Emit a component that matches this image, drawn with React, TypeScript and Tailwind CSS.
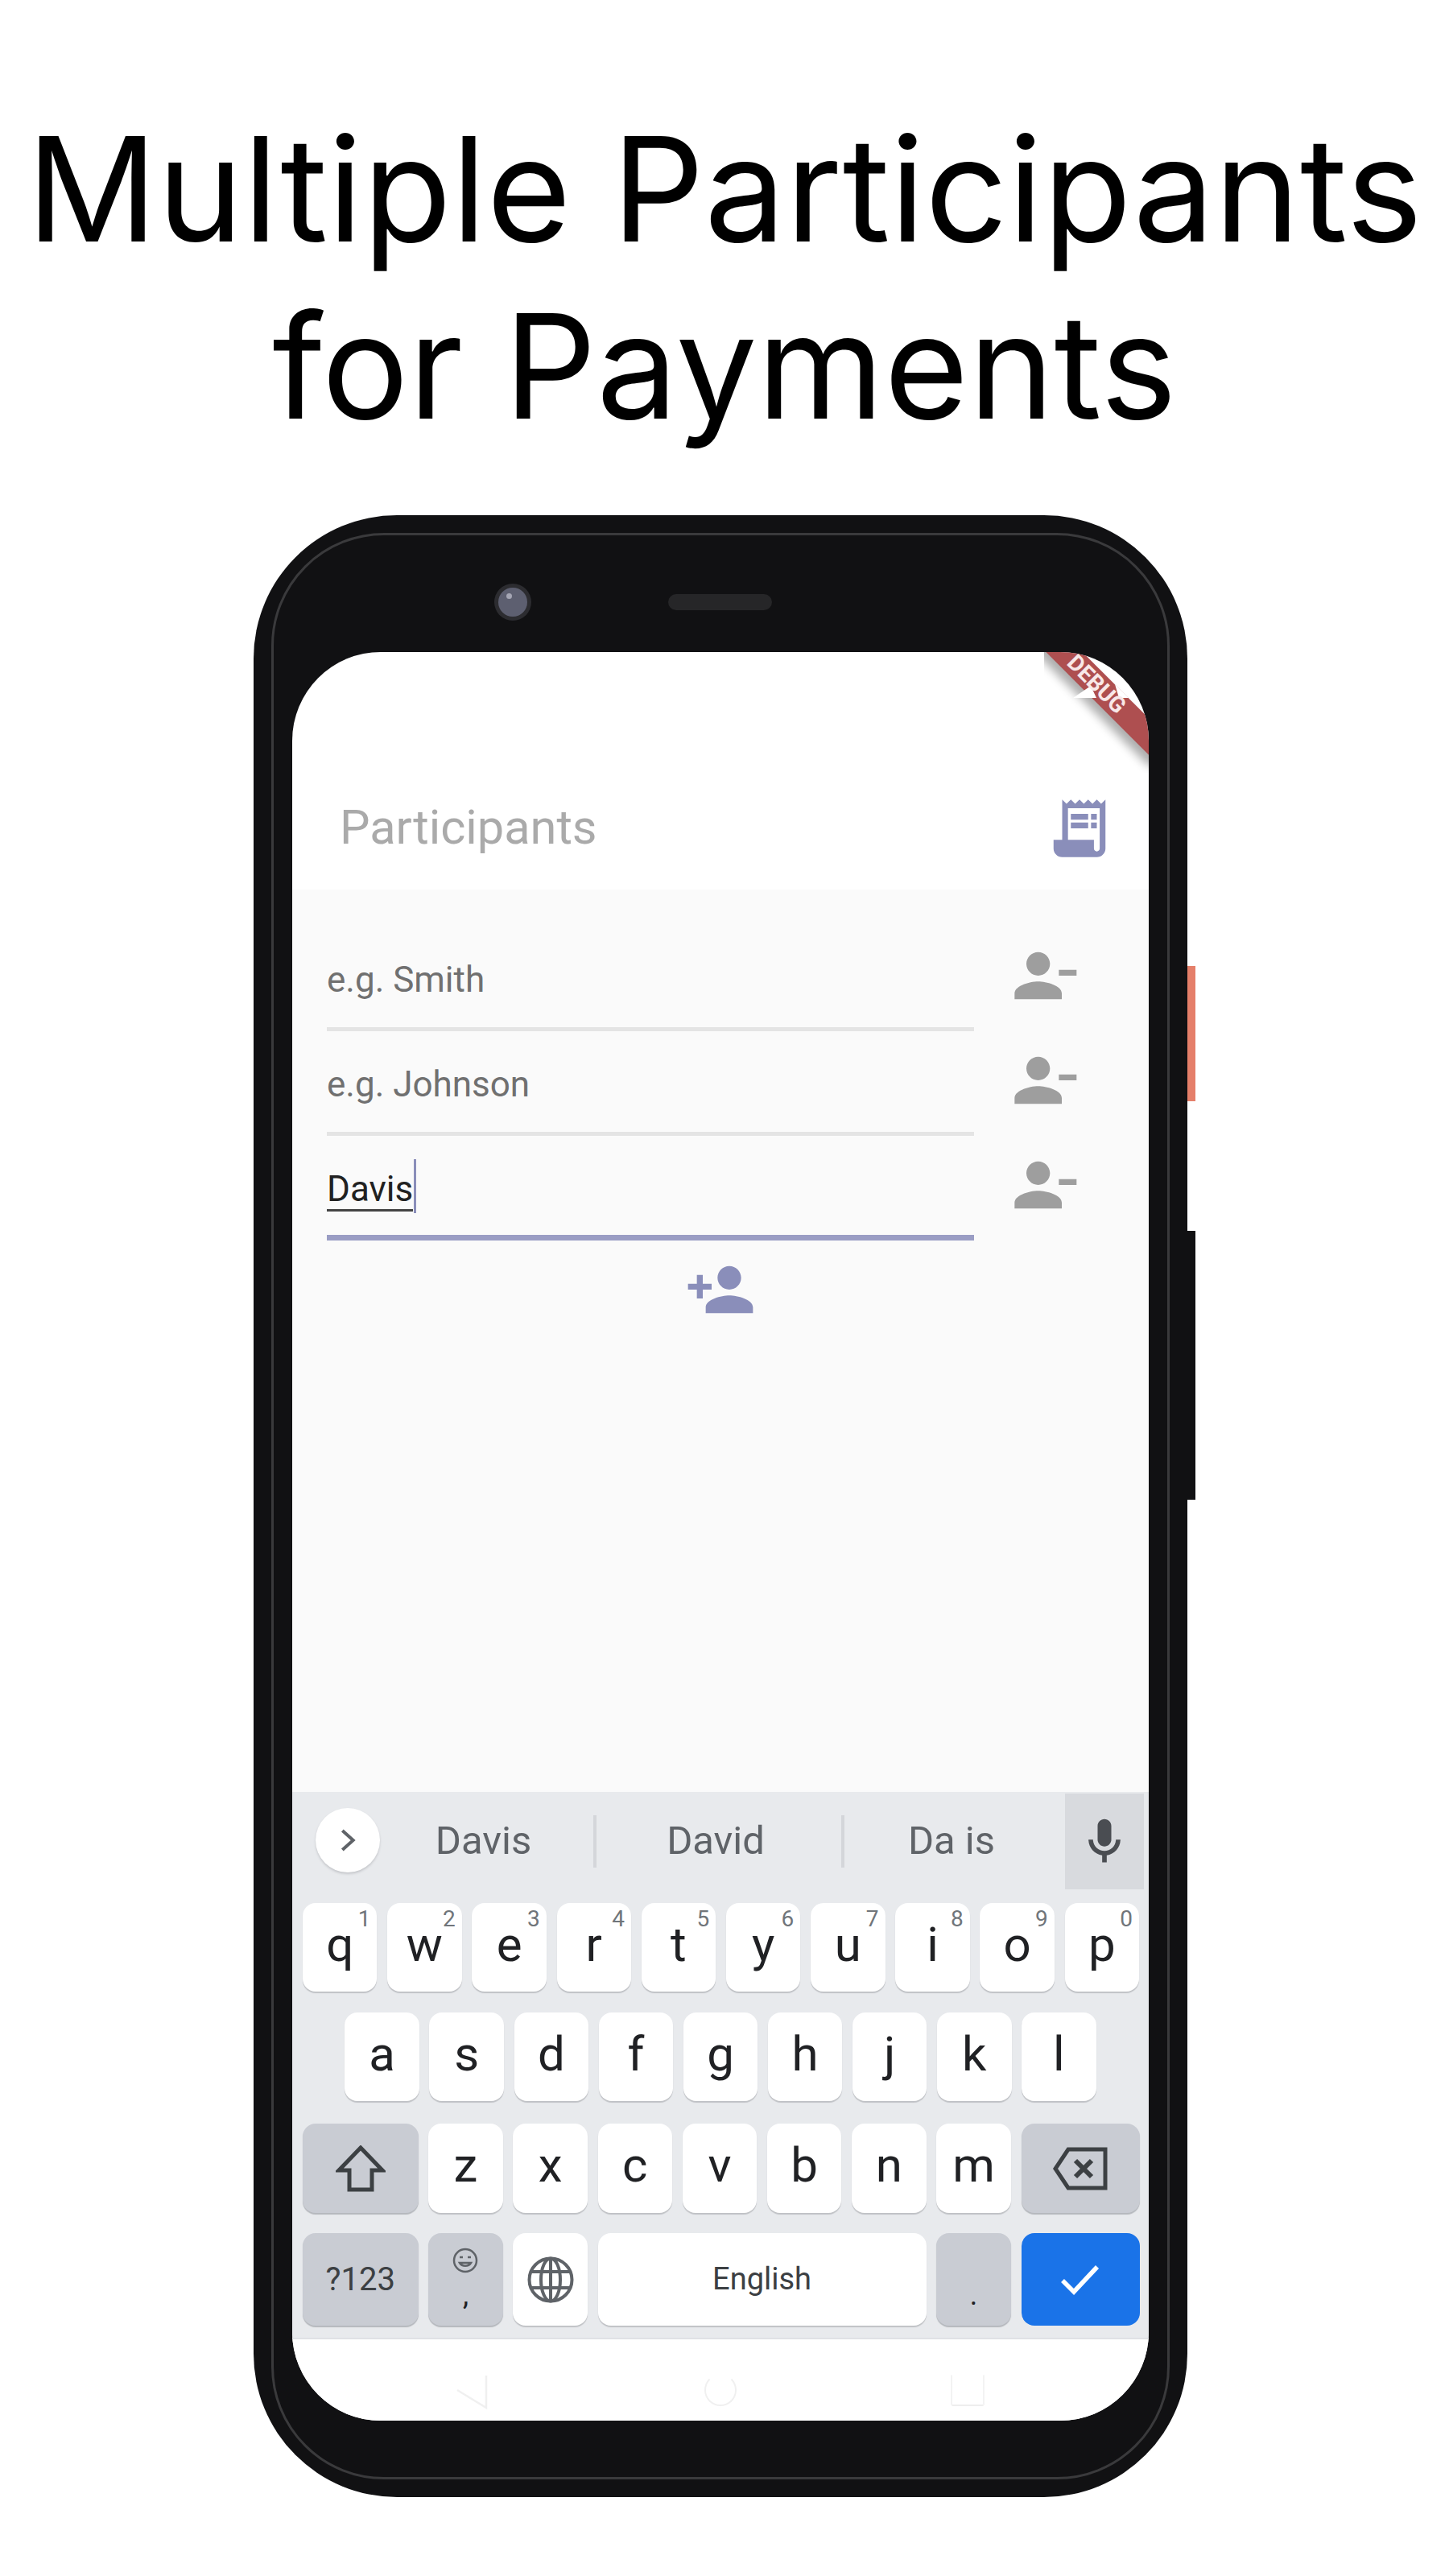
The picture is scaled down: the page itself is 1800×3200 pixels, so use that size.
const RECEIPT = 'M19.5 3.5L18 2l-1.5 1.5L15 2l-1.5 1.5L12 2l-1.5 1.5L9 2 7.5 3.5 6 2v14H3v3c0 1.66 1.34 3 3 3h12c1.66 0 3-1.34 3-3V2l-1.5 1.5zM19 19c0 .55-.45 1-1 1s-1-.45-1-1v-3H8V5h11v14zM9 7h6v2H9zM16 7h2v2h-2zM9 10h6v2H9zM16 10h2v2h-2z'
const PERSON_REMOVE = 'M14 8c0-2.21-1.79-4-4-4S6 5.79 6 8s1.79 4 4 4 4-1.79 4-4zm3 2v2h6v-2h-6zM2 18v2h16v-2c0-2.66-5.33-4-8-4s-8 1.34-8 4z'
const PERSON_ADD = 'M15 12c2.21 0 4-1.79 4-4s-1.79-4-4-4-4 1.79-4 4 1.79 4 4 4zm-9-2V7H4v3H1v2h3v3h2v-3h3v-2H6zm9 4c-2.67 0-8 1.34-8 4v2h16v-2c0-2.66-5.33-4-8-4z'
const MIC = 'M12 14c1.66 0 3-1.34 3-3V5c0-1.66-1.34-3-3-3S9 3.34 9 5v6c0 1.66 1.34 3 3 3zM17 11c0 2.76-2.24 5-5 5s-5-2.24-5-5H5c0 3.53 2.61 6.43 6 6.92V21h2v-3.08c3.39-.49 6-3.39 6-6.92h-2z'

const ROW_ONE: [string, string][] = [
  ['q', '1'], ['w', '2'], ['e', '3'], ['r', '4'], ['t', '5'],
  ['y', '6'], ['u', '7'], ['i', '8'], ['o', '9'], ['p', '0'],
]
const ROW_TWO = ['a', 's', 'd', 'f', 'g', 'h', 'j', 'k', 'l']
const ROW_THREE = ['z', 'x', 'c', 'v', 'b', 'n', 'm']

function Icon({ d, className }: { d: string; className: string }) {
  return (
    <svg viewBox="0 0 24 24" fill="currentColor" className={className}>
      <path d={d} />
    </svg>
  )
}

function Key({ label, hint, className = '' }: { label: string; hint?: string; className?: string }) {
  return (
    <div className={`relative flex items-center justify-center rounded-[16px] bg-white text-[60px] text-[#202124] shadow-[0_2px_1px_#c0c2c6] ${className}`}>
      {label}
      {hint && <span className="absolute right-[8px] top-[3px] text-[28px] leading-[34px] text-[#70757a]">{hint}</span>}
    </div>
  )
}

function FnKey({ children, className = '' }: { children?: React.ReactNode; className?: string }) {
  return (
    <div className={`relative flex items-center justify-center rounded-[16px] bg-[#c9ccd3] shadow-[0_2px_1px_#b5b8bd] ${className}`}>
      {children}
    </div>
  )
}

function Field({ placeholder, active }: { placeholder: string; active?: boolean }) {
  return (
    <div className="flex h-[130px] items-start">
      <div className={`ml-[43px] flex h-[130px] w-[804px] items-start pt-[41px] ${active ? 'border-b-[7px] border-[#9a9dc4]' : 'border-b-[5px] border-[#e4e4e4]'}`}>
        {active ? (
          <div className="flex items-start">
            <span className="border-b-[3px] border-[#444] text-[44px] leading-[50px] text-[#212121]">Davis</span>
            <span className="-mt-[12px] ml-[1px] h-[67px] w-[3px] bg-[#8a8eba]" />
          </div>
        ) : (
          <span className="text-[44px] leading-[50px] text-[#707070]">{placeholder}</span>
        )}
      </div>
      <Icon d={PERSON_REMOVE} className="ml-[43px] mt-[17px] h-[88px] w-[88px] text-[#9e9e9e]" />
    </div>
  )
}

function Globe() {
  return (
    <svg viewBox="0 0 58 58" fill="none" stroke="#5f6368" strokeWidth="4" className="h-[58px] w-[58px]">
      <circle cx="29" cy="29" r="26.5" />
      <ellipse cx="29" cy="29" rx="12" ry="26.5" />
      <path d="M29 2.5v53M4 19h50M4 39h50" />
    </svg>
  )
}

function DebugBanner() {
  return (
    <div className="absolute right-0 top-0 h-[150px] w-[130px] overflow-hidden">
      <div className="absolute left-[-55px] top-[24px] h-[32px] w-[240px] rotate-45 bg-[#ae4f50] shadow-[0_10px_12px_rgba(0,0,0,0.32)]" />
      <svg viewBox="0 0 130 150" fill="white" className="absolute left-0 top-0 h-[150px] w-[130px]">
        <path d="M36 57L58 42L65 57zM88 40L105 57H93z" />
      </svg>
      <div className="absolute left-[19px] top-[30px] h-[20px] w-[92px] rotate-45 text-center text-[28px] font-bold leading-[20px] text-[#f8e8e8]">
        DEBUG
      </div>
    </div>
  )
}

function NavBar() {
  return (
    <div className="flex h-[103px] shrink-0 items-start border-t-[2px] border-[#dfe1e5] bg-white pt-[43px]">
      <svg viewBox="0 0 40 44" fill="none" stroke="#f0f0f0" strokeWidth="2.5" className="ml-[203px] h-[44px] w-[40px]">
        <path d="M38 2v40L2 20" />
      </svg>
      <div className="ml-[269px] h-[40px] w-[40px] rounded-full border-[2px] border-[#f0f0f0] border-t-white" />
      <div className="ml-[266px] h-[40px] w-[42px] rounded-[3px] border-[2px] border-[#f3f3f3] border-t-white border-b-[#eeeeee]" />
    </div>
  )
}

export default function App() {
  return (
    <div className="h-[3200px] w-[1800px] overflow-hidden bg-white font-['Roboto',sans-serif]">
      <h1 className="whitespace-nowrap pt-[125px] text-center font-['Inter',sans-serif] text-[180px] font-normal leading-[220px] text-black">
        Multiple Participants
        <br />
        for Payments
      </h1>

      <div className="relative ml-[315px] mt-[75px] h-[2462px] w-[1160px] rounded-[178px] bg-[#111113] p-[22px]">
        <div className="absolute left-[1160px] top-[560px] h-[168px] w-[10px] bg-[#e57f6a]" />
        <div className="absolute left-[1160px] top-[889px] h-[334px] w-[10px] bg-[#111113]" />

        <div className="h-full w-[1116px] rounded-[140px] border-[3px] border-[#3a3a3c] px-[23px] pt-[145px]">
          <div className="absolute left-[299px] top-[85px] flex h-[46px] w-[46px] items-center justify-center rounded-full bg-[#2c2c30] p-[5px]">
            <div className="relative h-full w-full rounded-full bg-[#5d5f70]">
              <div className="absolute left-[10px] top-[7px] h-[7px] w-[7px] rounded-full bg-[#a5a6b4]" />
            </div>
          </div>
          <div className="absolute left-[515px] top-[98px] h-[20px] w-[129px] rounded-full bg-[#262628]" />

          <div className="relative flex h-[2197px] w-[1064px] flex-col overflow-hidden rounded-[110px] bg-white">
            <DebugBanner />
            <div className="flex h-[295px] shrink-0 items-start justify-between">
              <span className="ml-[59px] mt-[184px] text-[59.5px] leading-[68px] text-[#aaaaaa]">Participants</span>
              <Icon d={RECEIPT} className="mr-[43px] mt-[176px] h-[86px] w-[86px] text-[#8a8eba]" />
            </div>

            <div className="flex flex-1 flex-col bg-[#fafafa] pt-[46px]">
              <Field placeholder="e.g. Smith" />
              <Field placeholder="e.g. Johnson" />
              <Field placeholder="" active />
              <div className="flex justify-center">
                <Icon d={PERSON_ADD} className="mt-[17px] h-[88px] w-[88px] text-[#8a8eba]" />
              </div>
            </div>

            <div className="flex h-[678px] shrink-0 flex-col bg-[#e8eaed] px-[13px] pt-[2px]">
              <div className="-mr-[7px] flex h-[119px]">
                <div className="ml-[16px] mt-[18px] flex h-[80px] w-[80px] items-center justify-center rounded-full bg-white shadow-[0_2px_3px_#c4c6ca]">
                  <svg viewBox="0 0 24 24" fill="none" stroke="#5f6368" strokeWidth="3" className="h-[32px] w-[32px]">
                    <path d="M7 3l10 9-10 9" />
                  </svg>
                </div>
                <div className="flex flex-1 items-center">
                  <span className="w-[265px] pb-[2px] pr-[8px] text-center text-[49px] text-[#5f6368]">Davis</span>
                  <span className="h-[65px] w-[4px] bg-[#d4d6da]" />
                  <span className="w-[304px] pb-[2px] pr-[8px] text-center text-[49px] text-[#5f6368]">David</span>
                  <span className="h-[65px] w-[4px] bg-[#d4d6da]" />
                  <span className="flex-1 pb-[2px] pr-[8px] text-center text-[49px] text-[#5f6368]">Da is</span>
                </div>
                <div className="flex w-[98px] items-center justify-center bg-[#d8dade]">
                  <Icon d={MIC} className="h-[68px] w-[68px] text-[#4a4d52]" />
                </div>
              </div>

              <div className="-mr-[1px] mt-[17px] flex h-[110px] gap-[12.7px]">
                {ROW_ONE.map(([k, n]) => <Key key={k} label={k} hint={n} className="flex-1 pb-[6px]" />)}
              </div>
              <div className="mt-[26px] flex h-[110px] justify-center gap-[12.6px]">
                {ROW_TWO.map(k => <Key key={k} label={k} className="w-[92.5px] pb-[6px]" />)}
              </div>
              <div className="-mr-[2px] mt-[28px] flex h-[111px] gap-[12.7px]">
                <FnKey className="w-[143.5px]">
                  <svg viewBox="0 0 62 58" fill="none" stroke="#3c4043" strokeWidth="5" className="h-[58px] w-[62px]">
                    <path d="M31 3L4 31h13v24h28V31h13z" />
                  </svg>
                </FnKey>
                {ROW_THREE.map(k => <Key key={k} label={k} className="flex-1 pb-[8px]" />)}
                <FnKey className="w-[147.5px]">
                  <svg viewBox="0 0 68 54" fill="none" stroke="#3c4043" strokeWidth="5" className="h-[54px] w-[68px]">
                    <path d="M65 3H19L3 27l16 24h46z" />
                    <path d="M28 17l20 20M48 17L28 37" strokeWidth="6" />
                  </svg>
                </FnKey>
              </div>
              <div className="-mr-[2px] mt-[25px] flex h-[115px] gap-[12.7px]">
                <FnKey className="w-[143.5px] text-[40px] text-[#3c4043]">?123</FnKey>
                <FnKey className="w-[92.5px]">
                  <svg viewBox="0 0 32 32" fill="none" stroke="#5f6368" strokeWidth="2.5" className="absolute left-[30px] top-[18px] h-[32px] w-[32px]">
                    <circle cx="16" cy="16" r="14" />
                    <path d="M9 12h4M19 12h4M9 19c3 5 11 5 14 0z" />
                  </svg>
                  <span className="absolute bottom-[18px] text-[36px] leading-[40px] text-[#202124]">,</span>
                </FnKey>
                <div className="flex w-[92.5px] items-center justify-center rounded-[16px] bg-white shadow-[0_2px_1px_#c0c2c6]">
                  <Globe />
                </div>
                <div className="flex flex-1 items-center justify-center rounded-[16px] bg-white text-[38px] text-[#3c4043] shadow-[0_2px_1px_#c0c2c6]">
                  English
                </div>
                <FnKey className="w-[92.5px]">
                  <span className="absolute bottom-[18px] text-[36px] leading-[40px] text-[#202124]">.</span>
                </FnKey>
                <div className="flex w-[147.5px] items-center justify-center rounded-[16px] bg-[#1a73e8]">
                  <svg viewBox="0 0 48 38" fill="none" stroke="white" strokeWidth="5.5" className="h-[38px] w-[48px]">
                    <path d="M2 20l14 14L45 3" />
                  </svg>
                </div>
              </div>
            </div>

            <NavBar />
          </div>
        </div>
      </div>
    </div>
  )
}
